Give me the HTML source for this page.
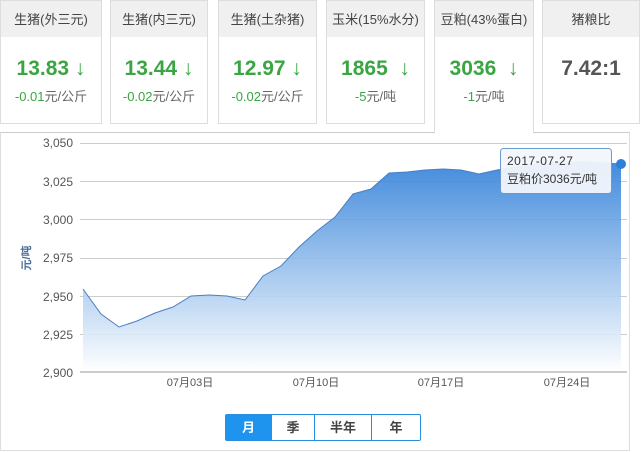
<!DOCTYPE html>
<html><head><meta charset="utf-8"><style>
*{margin:0;padding:0;box-sizing:border-box}
body{width:642px;height:452px;background:#fff;font-family:"Liberation Sans","Noto Sans CJK SC",sans-serif;position:relative;overflow:hidden}
.card{position:absolute;top:0;height:124px;border:1px solid #ddd;background:#fff}
.card .h{height:36px;background:#f0f0f0;font-size:13px;color:#444;text-align:center;line-height:38px}
.card .v{text-align:center;font-size:21px;font-weight:bold;color:#3aa542;margin-top:19px;line-height:26px}
.card .v.g{color:#555}
.card .d{text-align:center;font-size:13px;color:#3aa542;margin-top:4px}
.card .d span{color:#666}
.panel{position:absolute;left:0;top:132px;width:630px;height:319px;border:1px solid #ddd;border-top:1px solid #ccc}
.btns{position:absolute;left:225px;top:414px;height:27px;border:1px solid #2b8fdd;display:flex;border-radius:2px}
.btns div{font-size:13px;font-weight:bold;color:#444;text-align:center;line-height:25px;border-left:1px solid #2b8fdd}
.btns div:first-child{border-left:none;background:#1e94ee;color:#fff}
</style></head><body>
<div class="panel"></div>
<div class="card" style="left:0;width:102px"><div class="h">生猪(外三元)</div><div class="v">13.83 ↓</div><div class="d">-0.01<span>元/公斤</span></div></div>
<div class="card" style="left:110px;width:98px"><div class="h">生猪(内三元)</div><div class="v">13.44 ↓</div><div class="d">-0.02<span>元/公斤</span></div></div>
<div class="card" style="left:218px;width:99px"><div class="h">生猪(土杂猪)</div><div class="v">12.97 ↓</div><div class="d">-0.02<span>元/公斤</span></div></div>
<div class="card" style="left:326px;width:99px"><div class="h">玉米(15%水分)</div><div class="v">1865&nbsp; ↓</div><div class="d">-5<span>元/吨</span></div></div>
<div class="card" style="left:434px;width:100px;height:134px;border-bottom:none;border-color:#ddd"><div class="h">豆粕(43%蛋白)</div><div class="v">3036&nbsp; ↓</div><div class="d">-1<span>元/吨</span></div></div>
<div class="card" style="left:542px;width:98px"><div class="h">猪粮比</div><div class="v g">7.42:1</div></div>
<svg style="position:absolute;left:0;top:0" width="642" height="452">
<defs><linearGradient id="g" x1="0" y1="0" x2="0" y2="1"><stop offset="0" stop-color="#2f7fd9"/><stop offset="1" stop-color="#fff"/></linearGradient></defs>
<g stroke="#ccc" stroke-width="1">
<line x1="80" y1="143.5" x2="627" y2="143.5"/><line x1="80" y1="181.5" x2="627" y2="181.5"/><line x1="80" y1="219.5" x2="627" y2="219.5"/><line x1="80" y1="258.5" x2="627" y2="258.5"/><line x1="80" y1="296.5" x2="627" y2="296.5"/><line x1="80" y1="334.5" x2="627" y2="334.5"/>
</g>
<path d="M83,289 L101,314 L119,327 L137,321 L155,313 L173,307 L191,296 L209,295 L227,296 L245,300 L263,276 L281,266 L299,247 L317,231 L335,217 L353,194 L371,189 L389,173 L407,172 L425,170 L443,169 L461,170 L479,174 L497,170 L515,167 L533,165 L551,163 L569,162 L587,162 L605,163 L621,164 L621,372 L83,372 Z" fill="url(#g)" fill-opacity="0.9"/>
<path d="M83,289 L101,314 L119,327 L137,321 L155,313 L173,307 L191,296 L209,295 L227,296 L245,300 L263,276 L281,266 L299,247 L317,231 L335,217 L353,194 L371,189 L389,173 L407,172 L425,170 L443,169 L461,170 L479,174 L497,170 L515,167 L533,165 L551,163 L569,162 L587,162 L605,163 L621,164" fill="none" stroke="#4a7fc0" stroke-width="1"/>
<line x1="80" y1="372" x2="627" y2="372" stroke="#ccc" stroke-width="2"/>
<g font-size="12" fill="#555" text-anchor="end" font-family="Liberation Sans,sans-serif">
<text x="73" y="147">3,050</text><text x="73" y="186">3,025</text><text x="73" y="224">3,000</text><text x="73" y="262">2,975</text><text x="73" y="301">2,950</text><text x="73" y="339">2,925</text><text x="73" y="377">2,900</text>
</g>
<text transform="translate(30,258) rotate(-90)" font-size="11" fill="#4a6f9a" text-anchor="middle" font-weight="bold">元/吨</text>
<g font-size="11" fill="#555" text-anchor="middle">
<text x="190" y="386">07月03日</text><text x="316" y="386">07月10日</text><text x="441" y="386">07月17日</text><text x="567" y="386">07月24日</text>
</g>
<circle cx="621" cy="164" r="5" fill="#2f7fd9"/>
<rect x="500.5" y="148.5" width="111" height="45" rx="3" fill="#f2f6fb" fill-opacity="0.95" stroke="#6c9ad0"/>
<text x="507" y="165" font-size="12" fill="#333" letter-spacing="0.5">2017-07-27</text>
<text x="507" y="183" font-size="12" fill="#333">豆粕价3036元/吨</text>
</svg>
<div class="btns"><div style="width:45px">月</div><div style="width:43px">季</div><div style="width:57px">半年</div><div style="width:49px">年</div></div>
</body></html>
